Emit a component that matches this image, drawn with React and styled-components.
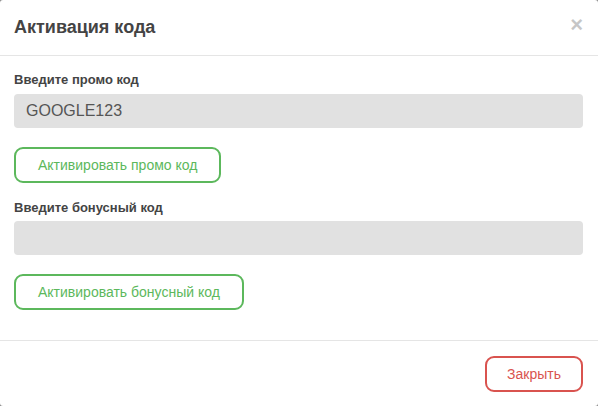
import React, { useState } from 'react';
import styled, { createGlobalStyle } from 'styled-components';

const Global = createGlobalStyle`
    html, body {
        margin: 0;
        height: 100%;
        background: #8a8a8a;
    }
    #root {
        height: 100%;
    }
`;

const Modal = styled.div`
    box-sizing: border-box;
    height: 406px;
    display: flex;
    flex-direction: column;
    background: #fff;
    border-radius: 3px;
    font-family: 'Liberation Sans', Arial, sans-serif;
    color: #444;
`;

const Header = styled.div`
    display: flex;
    align-items: center;
    justify-content: space-between;
    padding: 15px 15px 15px 14px;
    border-bottom: 1px solid #e5e5e5;
`;

const Title = styled.h4`
    margin: 0;
    font-size: 18px;
    line-height: 25px;
    font-weight: bold;
    color: #444;
`;

const CloseX = styled.button`
    border: 0;
    padding: 0;
    background: none;
    font-family: 'Liberation Sans', Arial, sans-serif;
    font-size: 22px;
    line-height: 1;
    font-weight: bold;
    color: #000;
    opacity: 0.22;
    margin-top: -5px;
    cursor: pointer;
`;

const Body = styled.div`
    flex: 1;
    display: flex;
    flex-direction: column;
    align-items: flex-start;
    padding: 15px 15px 0 14px;
`;

const Label = styled.label`
    font-size: 13px;
    line-height: 18px;
    font-weight: bold;
    color: #444;
    margin-bottom: ${p => p.gap || 5}px;
`;

const Input = styled.input`
    box-sizing: border-box;
    align-self: stretch;
    height: 34px;
    padding: 0 12px;
    border: 0;
    border-radius: 4px;
    background: #e1e1e1;
    font-family: 'Liberation Sans', Arial, sans-serif;
    font-size: 16px;
    color: #555;
    outline: none;
`;

const OutlineButton = styled.button`
    box-sizing: border-box;
    height: 36px;
    padding: 0 ${p => p.pad || 20}px;
    border: 2px solid ${p => p.color};
    border-radius: 9px;
    background: #fff;
    color: ${p => p.color};
    font-family: 'Liberation Sans', Arial, sans-serif;
    font-size: 14px;
    cursor: pointer;
    margin-top: 19px;
    margin-bottom: ${p => p.after || 0}px;
`;

const Footer = styled.div`
    display: flex;
    justify-content: flex-end;
    padding: 15px 15px 14px 15px;
    border-top: 1px solid #e5e5e5;
`;

const CloseButton = styled(OutlineButton)`
    margin: 0;
`;

const App = () => {
    const [promo, setPromo] = useState('GOOGLE123');
    const [bonus, setBonus] = useState('');

    return (
        <>
            <Global />
            <Modal>
                <Header>
                    <Title>Активация кода</Title>
                    <CloseX>×</CloseX>
                </Header>

                <Body>
                    <Label>Введите промо код</Label>
                    <Input value={promo} onChange={e => setPromo(e.target.value)} />
                    <OutlineButton color="#5cb85c" pad={22} after={16}>Активировать промо код</OutlineButton>

                    <Label gap={4}>Введите бонусный код</Label>
                    <Input value={bonus} onChange={e => setBonus(e.target.value)} />
                    <OutlineButton color="#5cb85c" pad={22}>Активировать бонусный код</OutlineButton>
                </Body>

                <Footer>
                    <CloseButton color="#d9534f">Закрыть</CloseButton>
                </Footer>
            </Modal>
        </>
    );
};

export default App;
